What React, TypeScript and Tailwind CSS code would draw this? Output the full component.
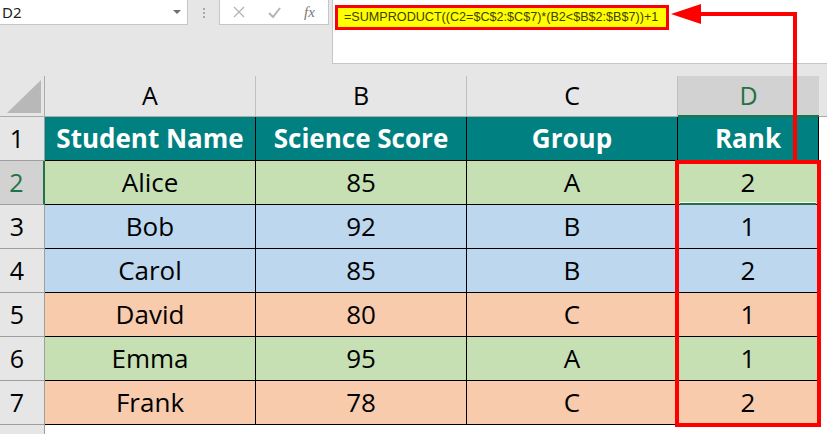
import React from "react";

type Row = { n: number; name: string; score: number; group: string; rank: number; bg: string };

const GREEN = "bg-[#c6e0b4]";
const BLUE = "bg-[#bdd7ee]";
const ORANGE = "bg-[#f8cbad]";

const rows: Row[] = [
  { n: 2, name: "Alice", score: 85, group: "A", rank: 2, bg: GREEN },
  { n: 3, name: "Bob", score: 92, group: "B", rank: 1, bg: BLUE },
  { n: 4, name: "Carol", score: 85, group: "B", rank: 2, bg: BLUE },
  { n: 5, name: "David", score: 80, group: "C", rank: 1, bg: ORANGE },
  { n: 6, name: "Emma", score: 95, group: "A", rank: 1, bg: GREEN },
  { n: 7, name: "Frank", score: 78, group: "C", rank: 2, bg: ORANGE },
];

const headers = ["Student Name", "Science Score", "Group", "Rank"];

function TopBar() {
  return (
    <div className="flex h-[64px]">
      <div className="flex w-[332px] items-start">
        <div className="flex h-[25px] w-[188px] items-center justify-between border-r border-b border-[#c6c6c6] bg-white pl-[2px] pr-[6px] font-['Noto_Sans',sans-serif] text-[15px] text-[#222]">
          <span>D2</span>
          <svg width="8" height="5" viewBox="0 0 8 5">
            <path d="M0 0 H8 L4 4 Z" fill="#6f6f6f" />
          </svg>
        </div>
        <div className="flex h-[25px] w-[31px] flex-col items-center justify-center gap-[2px]">
          <span className="h-[2px] w-[2px] bg-[#a8a8a8]" />
          <span className="h-[2px] w-[2px] bg-[#a8a8a8]" />
          <span className="h-[2px] w-[2px] bg-[#a8a8a8]" />
        </div>
        <div className="flex h-[25px] w-[110px] items-center border-x border-b border-[#c6c6c6] bg-white">
          <div className="flex w-[37px] justify-center">
            <svg width="12" height="12" viewBox="0 0 12 12">
              <path d="M1 1 L11 11 M11 1 L1 11" stroke="#b4b4b4" strokeWidth="1.3" />
            </svg>
          </div>
          <div className="flex w-[34px] justify-center">
            <svg width="13" height="11" viewBox="0 0 13 11">
              <path d="M1 6 L5 10 L12 1" stroke="#b4b4b4" strokeWidth="2" fill="none" />
            </svg>
          </div>
          <div className="flex w-[37px] justify-center font-['Liberation_Serif',serif] text-[15px] italic text-[#777]">
            fx
          </div>
        </div>
      </div>
      <div className="flex-1 border-l border-b border-[#c6c6c6] bg-white pl-[2px] pt-[3px]">
        <div className="inline-flex h-[25px] items-center border-[3px] border-[#ff0000] bg-[#ffff00] pl-[6px] pr-[8px] font-['Liberation_Sans',sans-serif] text-[12.6px] text-[#404000]">
          =SUMPRODUCT((C2=$C$2:$C$7)*(B2&lt;$B$2:$B$7))+1
        </div>
      </div>
    </div>
  );
}

function ColumnHeaders() {
  return (
    <div className="flex h-[41px] text-[25px] text-black">
      <div className="flex w-[45px] items-end justify-end border-r border-b border-[#ababab] pr-[3px] pb-[3px]">
        <svg width="34" height="33" viewBox="0 0 34 33">
          <path d="M34 0 V33 H0 Z" fill="#b8b8b8" />
        </svg>
      </div>
      {["A", "B", "C"].map((l) => (
        <div key={l} className="flex w-[211px] items-center justify-center border-r border-b border-r-[#c0c0c0] border-b-[#ababab]">
          {l}
        </div>
      ))}
      <div className="flex w-[141px] items-center justify-center border-b-2 border-[#217346] bg-[#d2d2d2] text-[#217346]">
        D
      </div>
      <div className="flex-1 border-b border-[#ababab]" />
    </div>
  );
}

function RowHeader({ n, selected }: { n: number; selected?: boolean }) {
  return (
    <div
      className={
        selected
          ? "flex w-[45px] items-center justify-center border-r-2 border-b border-r-[#217346] border-b-[#9e9e9e] bg-[#d2d2d2] pr-[10px] text-[25px] text-[#217346]"
          : "flex w-[45px] items-center justify-center border-r border-b border-[#9e9e9e] pr-[10px] text-[25px]"
      }
    >
      {n}
    </div>
  );
}

export default function App() {
  return (
    <div className="relative h-[434px] w-[827px] overflow-hidden bg-[#e6e6e6] font-['Open_Sans',sans-serif]">
      <TopBar />
      <div className="h-[12px]" />
      <ColumnHeaders />

      {/* header row */}
      <div className="flex h-[44px] text-[26px]">
        <RowHeader n={1} />
        {headers.map((h, i) => (
          <div
            key={h}
            className={`flex ${i === 3 ? "w-[141px]" : "w-[211px]"} items-center justify-center border-r border-b border-black bg-[#008080] font-bold text-white`}
          >
            {h}
          </div>
        ))}
        <div className="flex-1 bg-white" />
      </div>

      {rows.map((r) => (
        <div key={r.n} className="flex h-[44px] text-[26px] text-black">
          <RowHeader n={r.n} selected={r.n === 2} />
          <div className={`flex w-[211px] items-center justify-center border-r border-b border-black ${r.bg}`}>{r.name}</div>
          <div className={`flex w-[211px] items-center justify-center border-r border-b border-black ${r.bg}`}>{r.score}</div>
          <div className={`flex w-[211px] items-center justify-center border-r border-b border-black ${r.bg}`}>{r.group}</div>
          <div className={`relative flex w-[141px] items-center justify-center border-r border-b border-black ${r.bg}`}>
            {r.rank}
            {r.n === 2 && (
              <>
                <span className="absolute inset-x-[2px] bottom-[1px] h-[1px] bg-white" />
                <span className="absolute inset-x-[2px] bottom-[-1px] h-[2px] bg-[#217346]" />
              </>
            )}
          </div>
          <div className="flex-1 bg-white" />
        </div>
      ))}

      <div className="flex h-[9px]">
        <div className="w-[45px] border-r border-[#9e9e9e]" />
        <div className="flex-1 bg-white" />
      </div>

      {/* annotation: arrow and highlight box */}
      <svg className="pointer-events-none absolute inset-0" width="827" height="434" viewBox="0 0 827 434">
        <polygon points="671,14 701,4 701,24" fill="#ff0000" />
        <rect x="699" y="12" width="98" height="4" fill="#ff0000" />
        <rect x="793" y="12" width="4" height="150" fill="#ff0000" />
        <rect x="677" y="162" width="142" height="263" fill="none" stroke="#ff0000" strokeWidth="4" />
      </svg>
    </div>
  );
}
